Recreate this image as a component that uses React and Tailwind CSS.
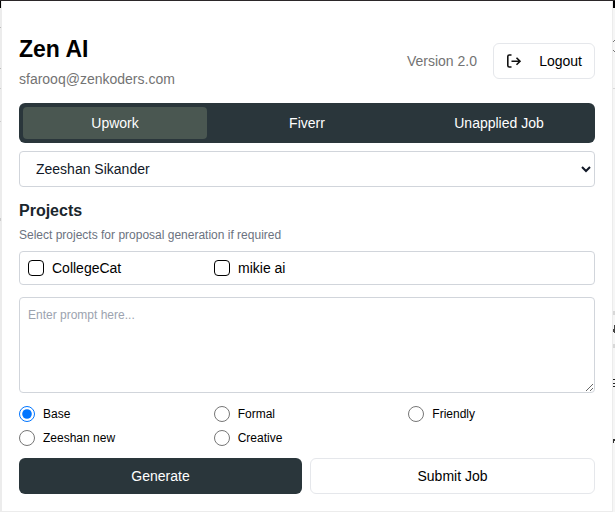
import { useState } from "react";

const tabs = ["Upwork", "Fiverr", "Unapplied Job"];
const projects = ["CollegeCat", "mikie ai"];
const tones = ["Base", "Formal", "Friendly", "Zeeshan new", "Creative"];

function LogoutIcon() {
  return (
    <svg
      viewBox="0 0 16 16"
      className="size-4"
      fill="none"
      stroke="#111111"
      strokeWidth="1.6"
      aria-hidden="true"
    >
      <path d="M5.500 2H3.300Q1.800 2 1.800 3.500v9Q1.800 14 3.300 14H5.500" />
      <path d="M5.500 8.300H14M10.500 4.800 14 8.300l-3.500 3.500" />
    </svg>
  );
}

/* Slivers of the page that stay visible around the popup */
function PageBehind() {
  return (
    <div
      className="absolute inset-0 flex justify-between overflow-hidden border-t border-[#2b2729] bg-[#ececec]"
      aria-hidden="true"
    >
      <svg width="1" height="512" shapeRendering="crispEdges">
        <path fill="#000000" d="M0 0h1v7h-1z" />
        <path fill="#bcbcbc" d="M0 26h1v1h-1zM0 67h1v1h-1z" />
        <path fill="#cccccc" d="M0 87h1v1h-1zM0 120h1v1h-1zM0 217h1v3h-1z" />
      </svg>
      <svg width="2" height="512" shapeRendering="crispEdges">
        <path fill="#f6f6f6" d="M0 0h2v512h-2z" />
        <path fill="#000000" d="M0 0h2v7h-2z" />
        <path fill="#777777" d="M0 40h1v1h-1zM1 39h1v1h-1zM0 49h1v1h-1zM1 50h1v1h-1z" />
        <path fill="#d8d8d8" d="M0 87h2v1h-2zM0 310h2v4h-2zM0 343h2v4h-2z" />
        <path fill="#444444" d="M1 324h1v8h-1zM0 328h1v3h-1z" />
        <path fill="#222222" d="M0 378h2v1h-2zM0 382h2v1h-2zM0 385h2v1h-2z" />
        <path fill="#333333" d="M0 438h2v2h-2zM0 440h1v2h-1z" />
      </svg>
    </div>
  );
}

export default function App() {
  const [tab, setTab] = useState("Upwork");
  const [tone, setTone] = useState("Base");

  return (
    <div className="relative pt-px pr-[3px] pb-px pl-0.5 font-['Liberation_Sans',Arial,sans-serif] text-sm text-black">
      <PageBehind />
      <main className="relative bg-white px-[17px] pt-[34px] pb-[17px]">
        <header className="flex items-start justify-between">
          <div>
            <h1 className="text-[23px] leading-7 font-bold">Zen AI</h1>
            <p className="mt-1 leading-6 text-[#737373]">sfarooq@zenkoders.com</p>
          </div>
          <div className="mt-2 flex items-center gap-4">
            <span className="text-[#737373]">Version 2.0</span>
            <button
              type="button"
              className="flex h-9 w-[102px] items-center justify-between rounded-md border border-[#e5e7eb] px-3"
            >
              <LogoutIcon />
              Logout
            </button>
          </div>
        </header>

        <nav className="mt-3 grid h-10 grid-cols-3 gap-2 rounded-md bg-[#2a363b] p-1 text-white">
          {tabs.map((name) => (
            <button
              key={name}
              type="button"
              onClick={() => setTab(name)}
              className={name === tab ? "rounded-sm bg-[#4a5751]" : "rounded-sm"}
            >
              {name}
            </button>
          ))}
        </nav>

        <select
          aria-label="Profile"
          className="mt-2 block h-9 w-full rounded-sm border border-[#d1d5db] bg-white px-3 text-[#111827]"
        >
          <option>Zeeshan Sikander</option>
        </select>

        <h2 className="mt-3 text-base leading-6 font-bold text-[#1a262d]">Projects</h2>
        <p className="mt-1 text-xs leading-4 text-[#6b7280]">
          Select projects for proposal generation if required
        </p>
        <div className="mt-2 grid h-[34px] grid-cols-3 items-center rounded-sm border border-[#d1d5db] px-2">
          {projects.map((name) => (
            <label key={name} className="flex items-center gap-2">
              <input
                type="checkbox"
                className="size-4 appearance-none rounded-sm border border-black checked:bg-[#2a363b]"
              />
              {name}
            </label>
          ))}
        </div>

        <textarea
          aria-label="Prompt"
          placeholder="Enter prompt here..."
          className="mt-3 block h-24 w-full rounded-sm border border-[#d1d5db] px-2 py-[7px] text-xs leading-5 placeholder:text-[#9ca3af]"
        />

        <div className="mt-[13px] grid grid-cols-3 gap-2 text-xs leading-4">
          {tones.map((name) => (
            <label key={name} className="flex items-center gap-2">
              <input
                type="radio"
                name="tone"
                checked={name === tone}
                onChange={() => setTone(name)}
                className="size-4"
              />
              {name}
            </label>
          ))}
        </div>

        <div className="mt-3 grid grid-cols-[283fr_285fr] gap-2">
          <button type="button" className="h-9 rounded-md bg-[#2a363b] text-white">
            Generate
          </button>
          <button type="button" className="h-9 rounded-md border border-[#e5e7eb]">
            Submit Job
          </button>
        </div>
      </main>
    </div>
  );
}
